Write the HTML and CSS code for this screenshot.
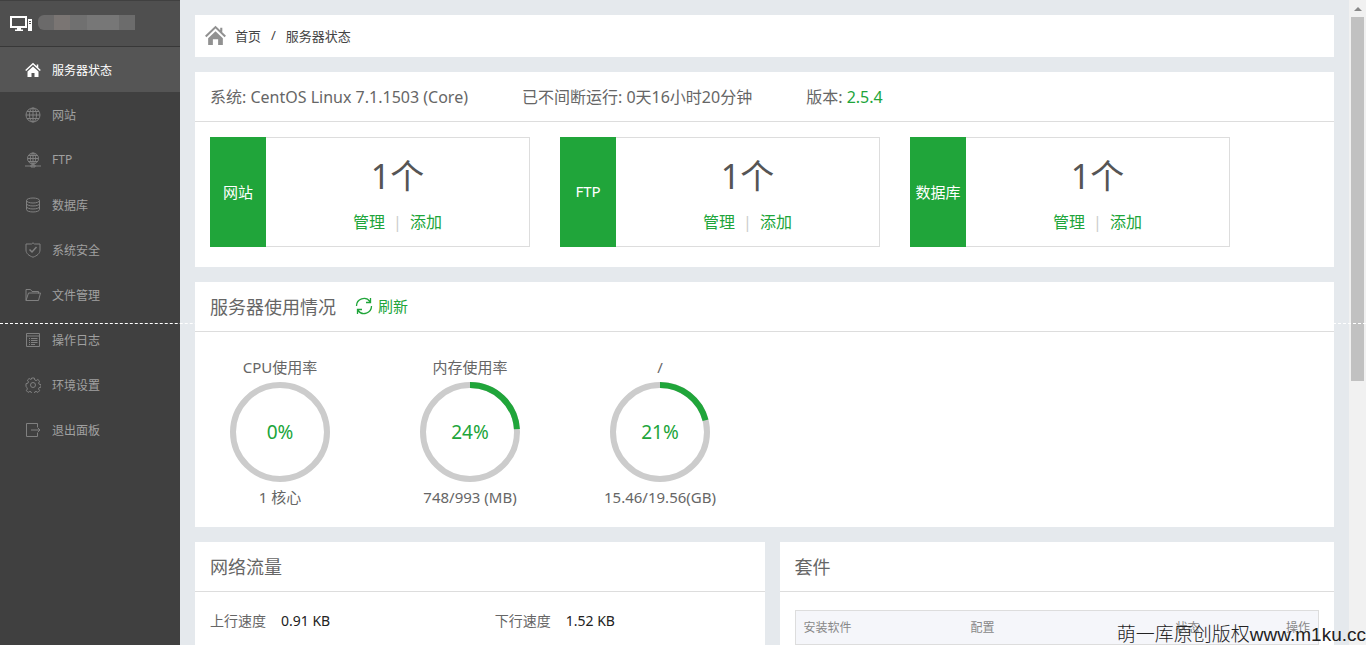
FILE: index.html
```
<!DOCTYPE html>
<html lang="zh-CN">
<head>
	<meta charset="UTF-8">
	<title>服务器状态</title>
	<link rel="stylesheet" href="styles.css">
</head>
<body>
	<div class="wrap">
		<!-- 左侧菜单 -->
		<div class="sidebar">
			<div class="server">
				<svg class="server-icon" viewBox="0 0 24 18"><path fill="none" stroke="#fff" stroke-width="2" d="M1 2h15v10H1z"/><path fill="#fff" d="M7 13h4v1.500h2V16H5v-1.500h2zM18 4h4v12h-4z"/><path fill="#4f4f4f" d="M19 6h2v1h-2zM19 8h2v1h-2z"/></svg>
				<div class="mask"><i class="m1"></i><i class="m2"></i><i class="m3"></i><i class="m4"></i><i class="m5"></i></div>
			</div>
			<ul class="menu">
				<li class="current"><a href="#">
					<svg viewBox="0 0 16 16"><path fill="#fff" d="M8 4.500l5.500 5V15H9.500v-4h-3v4h-4V9.500z"/><path fill="none" stroke="#fff" stroke-width="1.500" d="M.7 8.500L8 1.700l7.300 6.800M12.500 2.500v3"/></svg>服务器状态</a></li>
				<li><a href="#">
					<svg viewBox="0 0 16 16"><circle cx="8" cy="8" r="7"/><ellipse cx="8" cy="8" rx="3.500" ry="7"/><path d="M8 1v14M1 8h14M2 4.500h12M2 11.500h12"/></svg>网站</a></li>
				<li><a href="#">
					<svg viewBox="0 0 16 16"><circle cx="8" cy="6.500" r="5.500"/><ellipse cx="8" cy="6.500" rx="2.700" ry="5.500"/><path d="M8 1v13M2.500 6.500h11M3.500 3.500h9M3.500 9.500h9M0 14h16M6 13h4v2H6z"/></svg>FTP</a></li>
				<li><a href="#">
					<svg viewBox="0 0 16 16"><ellipse cx="8" cy="3.500" rx="6.500" ry="2.500"/><path d="M1.500 3.500v9c0 3.300 13 3.300 13 0v-9M1.500 6.500c0 3.300 13 3.300 13 0M1.500 9.500c0 3.300 13 3.300 13 0"/></svg>数据库</a></li>
				<li><a href="#">
					<svg viewBox="0 0 16 16"><path d="M8 .8l1.500 1.200H15v6c0 3.500-3 5.800-7 7.200C4 13.800 1 11.500 1 8V2h5.500z"/><path stroke-width="1.500" d="M4.500 7.500L7 10l4.500-5"/></svg>系统安全</a></li>
				<li><a href="#">
					<svg viewBox="0 0 16 16"><path d="M1 13.500V2.500h4.500l1.500 2h6.500v2M1 13.500h12.500l2-7.500H3.500L1 13.500"/></svg>文件管理</a></li>
				<li><a href="#">
					<svg viewBox="0 0 16 16"><path d="M1.500 1.500h13v13h-13zM1.500 4h13M4 6.500h1M6 6.500h6.500M4 8.500h1M6 8.500h6.500M4 10.500h1M6 10.500h6.500M4 12.500h1M6 12.500h4"/></svg>操作日志</a></li>
				<li><a href="#">
					<svg viewBox="0 0 16 16"><circle cx="8" cy="8" r="2.500"/><path d="M6.700 1h2.600l.5 2 1.300.6 1.800-1.100 1.700 1.700-1 1.800.5 1.200 1.900.5v2.400l-2 .6-.5 1.200 1.100 1.800-1.700 1.700-1.900-1-1.200.5-.5 2H6.700l-.6-2-1.200-.5-1.800 1-1.700-1.700 1-1.800-.5-1.200L1 9.300V6.700l1.900-.5.6-1.300-1.100-1.700 1.700-1.700 1.800 1 .3-.1z"/></svg>环境设置</a></li>
				<li><a href="#">
					<svg viewBox="0 0 16 16"><path d="M12.500 5V1.500h-11v13h11V11M6 8h9M12.500 5.500L15 8l-2.500 2.500"/></svg>退出面板</a></li>
			</ul>
		</div>

		<!-- 右侧内容 -->
		<div class="main">
			<div class="box position">
				<svg class="home" viewBox="0 0 20 20"><path fill="#919191" d="M10 6l7 6.500V19h-4.500v-5.500h-5V19H3v-6.500z"/><path fill="none" stroke="#919191" stroke-width="2" d="M.7 11L10 2l9.300 9M15.500 2.500v4"/></svg>
				<a href="#">首页</a><span class="slash">/</span><span>服务器状态</span>
			</div>

			<div class="box info">
				<div class="title system">
					<span>系统: CentOS Linux 7.1.1503 (Core)</span>
					<span>已不间断运行: 0天16小时20分钟</span>
					<span>版本: <b>2.5.4</b></span>
				</div>
				<div class="cards">
					<div class="card">
						<div class="card-name">网站</div>
						<div class="card-con">
							<p class="num">1个</p>
							<p class="links"><a href="#">管理</a><i>|</i><a href="#">添加</a></p>
						</div>
					</div>
					<div class="card">
						<div class="card-name">FTP</div>
						<div class="card-con">
							<p class="num">1个</p>
							<p class="links"><a href="#">管理</a><i>|</i><a href="#">添加</a></p>
						</div>
					</div>
					<div class="card">
						<div class="card-name">数据库</div>
						<div class="card-con">
							<p class="num">1个</p>
							<p class="links"><a href="#">管理</a><i>|</i><a href="#">添加</a></p>
						</div>
					</div>
				</div>
			</div>

			<div class="box usage">
				<div class="title">
					<h3>服务器使用情况</h3>
					<button type="button" class="refresh"><svg viewBox="0 0 18 18"><path d="M1.500 9A7.500 7.500 0 0 1 15 4.500M15.500 1v4.500H11M16.500 9A7.500 7.500 0 0 1 3 13.500M2.500 17v-4.500H7"/></svg>刷新</button>
				</div>
				<ul class="rings">
					<li>
						<p>CPU使用率</p>
						<div class="ring">
							<svg viewBox="0 0 100 100"><circle cx="50" cy="50" r="47"/></svg>
							<span>0%</span>
						</div>
						<p>1 核心</p>
					</li>
					<li>
						<p>内存使用率</p>
						<div class="ring">
							<svg viewBox="0 0 100 100"><circle cx="50" cy="50" r="47"/><circle class="used" cx="50" cy="50" r="47" pathLength="100" stroke-dasharray="24 76"/></svg>
							<span>24%</span>
						</div>
						<p>748/993 (MB)</p>
					</li>
					<li>
						<p>/</p>
						<div class="ring">
							<svg viewBox="0 0 100 100"><circle cx="50" cy="50" r="47"/><circle class="used" cx="50" cy="50" r="47" pathLength="100" stroke-dasharray="21 79"/></svg>
							<span>21%</span>
						</div>
						<p>15.46/19.56(GB)</p>
					</li>
				</ul>
			</div>

			<div class="bottom">
				<div class="box network">
					<div class="title"><h3>网络流量</h3></div>
					<div class="speed">
						<p>上行速度<span>0.91 KB</span></p>
						<p>下行速度<span>1.52 KB</span></p>
					</div>
				</div>
				<div class="box soft">
					<div class="title"><h3>套件</h3></div>
					<table>
						<thead>
							<tr><th class="col-name">安装软件</th><th class="col-set">配置</th><th class="col-state">状态</th><th class="col-opt">操作</th></tr>
						</thead>
					</table>
				</div>
			</div>
		</div>

		<div class="scrollbar"><div class="arrow"></div><div class="thumb"></div></div>
		<div class="cut-line"></div>
		<div class="watermark">萌一库原创版权www.m1ku.cc</div>
	</div>
</body>
</html>
```
FILE: styles.css
```
*{
	margin: 0;
	padding: 0;
	box-sizing: border-box;
}
body{
	font-family: "Noto Sans", "Noto Sans CJK SC", sans-serif;
	font-size: 15px;
	color: #666;
	background: #e5e9ed;
}
ul{
	list-style: none;
}
a{
	color: inherit;
	text-decoration: none;
}
.wrap{
	display: flex;
	position: relative;
	height: 100vh;
	overflow: hidden;
}

/* 左侧菜单 */
.sidebar{
	flex: none;
	width: 180px;
	background: #404040;
}
.server{
	display: flex;
	height: 47px;
	padding: 14px 10px;
	gap: 4px;
	background: #4f4f4f;
	border-top: 1px solid #404040;
	border-bottom: 1px solid #383838;
}
.server-icon{
	width: 24px;
	height: 18px;
}
.mask{
	display: flex;
	width: 97px;
	height: 15px;
	border-radius: 6px 0 0 6px;
	overflow: hidden;
}
.mask i{
	flex: 1;
}
.mask .m1{
	background: #6b6a6a;
}
.mask .m2{
	background: #7a7573;
}
.mask .m3{
	background: #707070;
}
.mask .m4{
	flex: 2;
	background: #777;
}
.mask .m5{
	background: #6c6c6c;
}
.menu a{
	display: flex;
	align-items: center;
	height: 45px;
	padding-left: 25px;
	gap: 11px;
	font-size: 12px;
	color: #a0a0a0;
}
.menu .current a{
	background: #555;
	color: #fff;
}
.menu svg{
	width: 16px;
	height: 16px;
	fill: none;
	stroke: #808080;
}
.menu .current svg{
	stroke: none;
}

/* 右侧内容 */
.main{
	flex: 1;
	min-width: 0;
	padding: 15px 15px 0;
}
.box{
	background: #fff;
	margin-bottom: 15px;
}
.position{
	display: flex;
	align-items: center;
	height: 42px;
	padding: 0 10px 2px;
	font-size: 13px;
	color: #444;
}
.home{
	width: 21px;
	height: 21px;
	margin-right: 9px;
}
.slash{
	margin: 0 10px;
}
.title{
	display: flex;
	align-items: center;
	height: 50px;
	padding: 0 15px 2px;
	border-bottom: 1px solid #ddd;
}
.title h3{
	font-size: 18px;
	font-weight: 400;
}
.system{
	gap: 54px;
	font-size: 16px;
}
.system b{
	font-weight: 400;
	color: #20a53a;
}
.cards{
	display: flex;
	gap: 30px;
	padding: 15px 15px 20px;
}
.card{
	display: flex;
	width: 320px;
	height: 110px;
}
.card-name{
	display: flex;
	align-items: center;
	justify-content: center;
	width: 56px;
	padding-bottom: 2px;
	background: #20a53a;
	color: #fff;
}
.card-con{
	flex: 1;
	padding-top: 14px;
	border: 1px solid #ddd;
	border-left: 0;
	text-align: center;
}
.num{
	font-size: 34px;
	line-height: 48px;
	color: #555;
}
.links{
	padding-top: 10px;
	font-size: 16px;
	line-height: 24px;
	color: #20a53a;
}
.links i{
	margin: 0 8px;
	font-style: normal;
	color: #ccc;
}
.refresh{
	display: flex;
	align-items: center;
	gap: 5px;
	margin-left: 19px;
	border: 0;
	background: none;
	font: inherit;
	color: #20a53a;
	cursor: pointer;
}
.refresh svg{
	width: 18px;
	height: 18px;
	fill: none;
	stroke: #20a53a;
	stroke-width: 1.3;
}
.rings{
	display: flex;
	gap: 50px;
	padding: 23px 15px 18px;
}
.rings li{
	width: 140px;
	text-align: center;
}
.rings p{
	line-height: 24px;
}
.ring{
	display: grid;
	place-items: center;
	width: 100px;
	height: 100px;
	margin: 3px auto;
}
.ring svg,
.ring span{
	grid-area: 1 / 1;
}
.ring span{
	font-size: 19px;
	color: #20a53a;
}
.ring circle{
	fill: none;
	stroke: #ccc;
	stroke-width: 6;
}
.ring .used{
	stroke: #20a53a;
	transform: rotate(-90deg);
	transform-origin: center;
}
.bottom{
	display: flex;
	gap: 15px;
}
.network{
	flex: 0 0 50%;
	min-width: 0;
}
.soft{
	flex: 1;
}
.speed{
	display: flex;
	height: 300px;
	padding-top: 17px;
	font-size: 14px;
	line-height: 24px;
}
.speed p{
	flex: 1;
	padding-left: 15px;
}
.speed span{
	margin-left: 15px;
	color: #222;
}
.soft table{
	width: calc(100% - 30px);
	margin: 18px 15px;
	border: 1px solid #ddd;
	border-collapse: collapse;
	table-layout: fixed;
}
.soft th{
	height: 34px;
	padding: 0 8px 2px;
	background: #f5f6fa;
	border-bottom: 1px solid #ddd;
	font-size: 12px;
	font-weight: 400;
	color: #888;
	text-align: left;
}
.soft .col-name{
	width: 32%;
}
.soft .col-set{
	width: 33%;
}
.soft .col-state{
	width: 20%;
	text-align: center;
}
.soft .col-opt{
	text-align: right;
}

/* 滚动条 */
.scrollbar{
	flex: none;
	width: 17px;
	padding: 7px 2px 0;
	background: #f1f1f1;
}
.arrow{
	width: 8px;
	margin: 0 auto 6px;
	border: 4px solid transparent;
	border-top: 0;
	border-bottom-color: #888;
}
.thumb{
	height: 57%;
	background: #c1c1c1;
}
.cut-line{
	position: absolute;
	top: 50%;
	left: 0;
	right: 0;
	border-top: 1px dashed #fff;
}
.watermark{
	position: absolute;
	right: 0;
	bottom: 0;
	font-family: "Liberation Sans", "Noto Sans CJK SC", sans-serif;
	font-size: 19px;
	font-weight: 300;
	line-height: 20px;
	color: #222;
	white-space: nowrap;
}
```
